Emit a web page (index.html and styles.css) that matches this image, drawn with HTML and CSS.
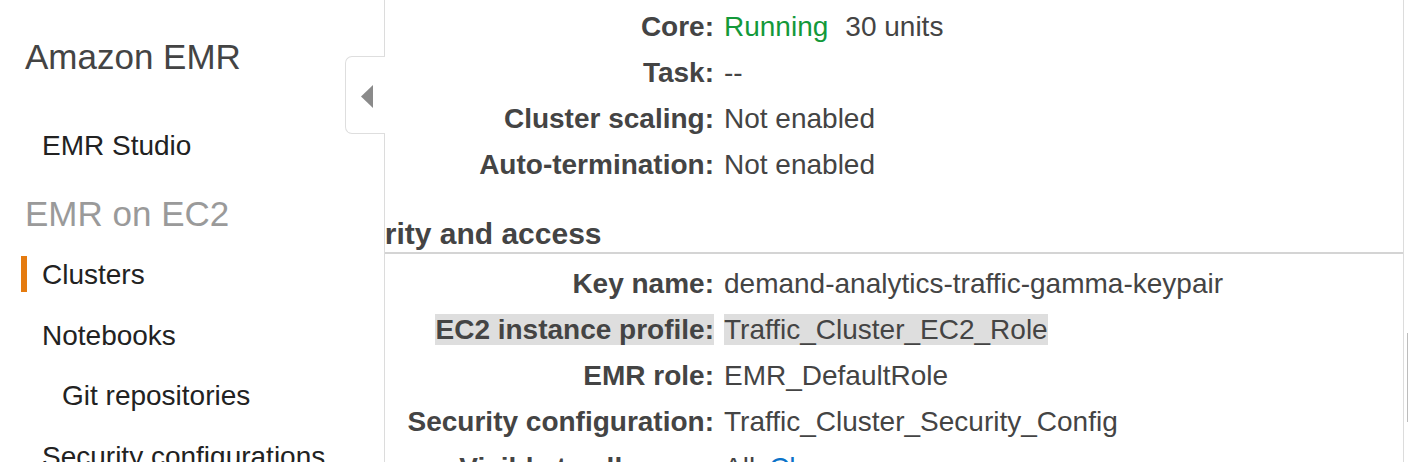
FILE: index.html
```html
<!DOCTYPE html>
<html>
<head>
<meta charset="utf-8">
<link rel="stylesheet" href="styles.css">
</head>
<body>
<div class="page">
  <nav class="sidebar">
    <div class="title">Amazon EMR</div>
    <div class="item studio">EMR Studio</div>
    <div class="section">EMR on EC2</div>
    <div class="item active">Clusters</div>
    <div class="item">Notebooks</div>
    <div class="item sub">Git repositories</div>
    <div class="item">Security configurations</div>
    <div class="collapse-tab">
      <svg width="12" height="23" viewBox="0 0 12 23"><polygon points="12,0 0,11.5 12,23" fill="#8a8a8a"/></svg>
    </div>
  </nav>
  <main class="main">
    <div class="rows">
      <div class="row"><span class="label">Core:</span><span class="value"><span class="ok">Running</span><span class="units">30 units</span></span></div>
      <div class="row"><span class="label">Task:</span><span class="value">--</span></div>
      <div class="row"><span class="label">Cluster scaling:</span><span class="value">Not enabled</span></div>
      <div class="row"><span class="label">Auto-termination:</span><span class="value">Not enabled</span></div>
    </div>
    <h2 class="heading">Security and access</h2>
    <div class="rows second">
      <div class="row"><span class="label">Key name:</span><span class="value">demand-analytics-traffic-gamma-keypair</span></div>
      <div class="row"><span class="label"><span class="sel">EC2 instance profile:</span></span><span class="value"><span class="sel">Traffic_Cluster_EC2_Role</span></span></div>
      <div class="row"><span class="label">EMR role:</span><span class="value">EMR_DefaultRole</span></div>
      <div class="row"><span class="label">Security configuration:</span><span class="value">Traffic_Cluster_Security_Config</span></div>
      <div class="row"><span class="label">Visible to all users:</span><span class="value">All<a class="link">Change</a></span></div>
    </div>
  </main>
  <div class="scrollbar"><div class="thumb"></div></div>
</div>
</body>
</html>
```

FILE: styles.css
```css
html, body {
  margin: 0;
  padding: 0;
  background: #fff;
}
body {
  font-family: "Liberation Sans", Arial, Helvetica, sans-serif;
  width: 1408px;
  height: 462px;
  overflow: hidden;
}
.page {
  display: flex;
  height: 462px;
}
.sidebar {
  position: relative;
  width: 384px;
  flex: 0 0 384px;
  border-right: 1px solid #dcdcdc;
  background: #fff;
  padding-top: 37px;
  box-sizing: content-box;
}
.title {
  font-size: 35px;
  line-height: 40px;
  color: #444;
  padding-left: 25px;
  margin-bottom: 39px;
}
.section {
  font-size: 35px;
  line-height: 40px;
  color: #9a9a9a;
  padding-left: 25px;
  margin-bottom: 11px;
}
.item {
  position: relative;
  font-size: 28px;
  line-height: 60.5px;
  color: #222;
  padding-left: 42px;
  white-space: nowrap;
}
.item.studio {
  margin-bottom: 18px;
  line-height: 60px;
}
.item.sub {
  padding-left: 62px;
}
.item.active::before {
  content: "";
  position: absolute;
  left: 21px;
  top: 11px;
  width: 6px;
  height: 36px;
  background: #e57b0f;
}
.collapse-tab {
  position: absolute;
  left: 345px;
  top: 56px;
  width: 40px;
  height: 78px;
  box-sizing: border-box;
  background: #fff;
  border: 1px solid #dedede;
  border-right: none;
  border-radius: 7px 0 0 7px;
  display: flex;
  align-items: flex-start;
  padding: 28px 0 0 15px;
}
.collapse-tab svg {
  display: block;
}
.main {
  flex: 1;
  overflow: hidden;
  border-right: 1px solid #dcdcdc;
  padding-top: 4px;
  background: #fff;
}
.rows {
  display: flex;
  flex-direction: column;
}
.row {
  display: grid;
  grid-template-columns: 329px 1fr;
  column-gap: 10px;
  font-size: 28px;
  line-height: 46px;
  color: #444;
  white-space: nowrap;
}
.label {
  font-weight: bold;
  text-align: right;
  color: #444;
}
.value {
  color: #444;
}
.ok {
  color: #13993a;
}
.units {
  margin-left: 17px;
}
.sel {
  background: #dedede;
}
.link {
  color: #0a73c9;
  margin-left: 14px;
}
.heading {
  margin: 28px 0 0 -72px;
  font-size: 30px;
  line-height: 36px;
  font-weight: bold;
  color: #444;
  border-bottom: 2px solid #d4d4d4;
  padding-left: 0;
}
.rows.second {
  padding-top: 7px;
}
.scrollbar {
  flex: 0 0 4px;
  position: relative;
}
.thumb {
  margin-top: 333px;
  margin-left: 3px;
  width: 1px;
  height: 89px;
  background: #bdbdbd;
}
```
